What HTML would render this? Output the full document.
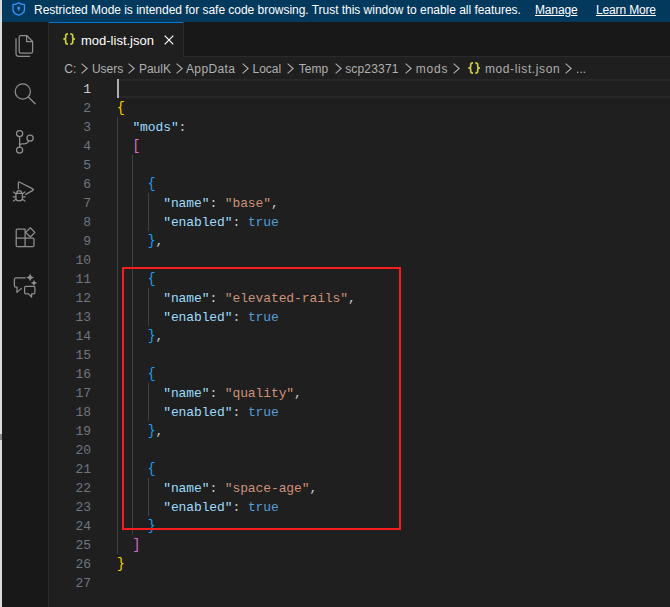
<!DOCTYPE html>
<html><head><meta charset="utf-8">
<style>
*{box-sizing:border-box}
html,body{margin:0;padding:0}
body{width:670px;height:607px;overflow:hidden;background:#1f1f1f;position:relative;font-family:"Liberation Sans",sans-serif}
.abs{position:absolute}
#strip{left:0;top:0;width:2px;height:607px;background:#d8dbe0}
#banner{left:2px;top:0;width:668px;height:22px;background:#04395e;color:#fff;font-size:12px}
#banner .t{position:absolute;top:3px;white-space:pre;line-height:14px}
#banner u{text-decoration:underline;text-underline-offset:1px}
#act{left:2px;top:22px;width:46px;height:585px;background:#181818}
#actb{left:48px;top:22px;width:1px;height:585px;background:#2b2b2b}
#tabs{left:49px;top:22px;width:621px;height:35px;background:#181818}
#tabsb{left:184px;top:56px;width:486px;height:1px;background:#2b2b2b}
#tab{left:49px;top:22px;width:134px;height:35px;background:#1f1f1f}
#tabtop{left:49px;top:22px;width:134px;height:1px;background:#0078d4}
#tabr{left:183px;top:22px;width:1px;height:35px;background:#2b2b2b}
.bc{position:absolute;top:61px;font-size:12px;color:#b0b0b0;white-space:pre;line-height:16px}
.chev{position:absolute;top:62.5px}
.ln{position:absolute;left:59px;width:32px;text-align:right;font-family:"Liberation Mono",monospace;font-size:13px;color:#6e7681;line-height:19px;height:19px}
.ln.act{color:#cccccc}
.cl{position:absolute;left:117px;font-family:"Liberation Mono",monospace;font-size:13px;letter-spacing:-0.105px;color:#cccccc;line-height:19px;height:19px;white-space:pre}
.k{color:#9cdcfe}.s{color:#ce9178}.b{color:#569cd6}
.g1{color:#ffd700}.g2{color:#da70d6}.g3{color:#179fff}
.g1,.g2,.g3{display:inline-block;transform:scaleY(1.1);transform-origin:50% 16px}
.guide{position:absolute;width:1px;background:#404040}
</style></head><body>
<div id="strip" class="abs"></div>
<div class="abs" style="left:0;top:434px;width:2px;height:6px;background:#8a8a8a"></div>
<div id="banner" class="abs">
  <svg class="abs" style="left:-2px;top:0" width="40" height="22" viewBox="0 0 40 22"><path d="M18.7 2.7 C17 3.9 15 4.6 13 4.6 V9.5 C13 12.3 15.5 14.3 18.7 15.2 C21.9 14.3 24.5 12.3 24.5 9.5 V4.6 C22.4 4.6 20.4 3.9 18.7 2.7 Z" fill="none" stroke="#3794ff" stroke-width="1.3" stroke-linejoin="round"/><circle cx="18.7" cy="7.9" r="1.4" fill="#3794ff"/><rect x="18.1" y="8.3" width="1.2" height="2.3" fill="#3794ff"/></svg>
  <span class="t" style="left:32px;letter-spacing:-0.03px">Restricted Mode is intended for safe code browsing. Trust this window to enable all features.</span>
  <span class="t" style="left:533px;letter-spacing:-0.15px"><u>Manage</u></span>
  <span class="t" style="left:594px;letter-spacing:-0.15px"><u>Learn More</u></span>
</div>
<div id="act" class="abs"></div>
<div id="actb" class="abs"></div>
<svg class="abs" style="left:0;top:0" width="48" height="607" viewBox="0 0 48 607" fill="none" stroke="#8e8e8e" stroke-width="1.25" stroke-linejoin="round" stroke-linecap="round">
<path d="M19.2 37.1 Q19.2 35.5 20.8 35.5 H26.6 L32.6 41.5 V51.5 Q32.6 53.1 31 53.1 H20.8 Q19.2 53.1 19.2 51.5 Z"/>
<path d="M26.6 35.5 V41.5 H32.6"/>
<path d="M16 38.6 V53.5 Q16 56.3 18.8 56.3 H29.6"/>
<circle cx="22.8" cy="91.5" r="7.6"/>
<path d="M28.3 97 L35.2 103.8"/>
<circle cx="19.6" cy="133.6" r="3.1"/>
<circle cx="19.6" cy="150.1" r="3.1"/>
<circle cx="30.1" cy="138.1" r="3.1"/>
<path d="M19.6 136.7 V147 M28.6 140.9 Q27.5 143.8 24.5 143.8 H22 Q19.6 143.8 19.6 146.2"/>
<path d="M18.4 188.6 V183.2 Q18.2 181.5 19.8 182.2 L32.8 188.9 Q34 189.7 32.8 190.4 L25.8 194.4"/>
<path d="M15.9 193.3 H22.4 V198.3 Q22.4 200.9 19.15 200.9 Q15.9 200.9 15.9 198.3 Z"/>
<path d="M16.7 193.3 Q16.7 190.7 19.15 190.7 Q21.6 190.7 21.6 193.3"/>
<path d="M13.4 191.9 L15.9 193.7 M13.1 196.8 H15.9 M13.4 201 L15.9 199.3 M24.9 191.9 L22.4 193.7 M25.2 196.8 H22.4 M24.9 201 L22.4 199.3"/>
<path d="M17.4 229.2 H25.1 V246.6 H17.4 Q16.2 246.6 16.2 245.4 V230.4 Q16.2 229.2 17.4 229.2 Z M16.2 238 H32.8 Q34 238 34 239.2 V245.4 Q34 246.6 32.8 246.6 H25.1"/>
<path d="M30.3 227.8 L34.9 232.4 L30.3 237 L25.7 232.4 Z"/>
<path d="M25.2 277.9 H16 Q14.4 277.9 14.4 279.5 V285.4 Q14.4 287 16 287 H17 V292.4 L21.4 288.4"/>
<path d="M26 286.4 H33.6 Q34.9 286.4 34.9 287.7 V292.6 Q34.9 293.9 33.6 293.9 H31.6 V297 L28.6 293.9 H26 Q24.6 293.9 24.6 292.6 V287.7 Q24.6 286.4 26 286.4 Z"/>
</svg>
<svg class="abs" style="left:0;top:0" width="48" height="607" viewBox="0 0 48 607" fill="#8e8e8e" stroke="none">
<path d="M30.1 273.6 Q30.86 276.88 34.300000000000004 277.6 Q30.86 278.32 30.1 281.6 Q29.34 278.32 25.900000000000002 277.6 Q29.34 276.88 30.1 273.6 Z"/>
<path d="M34.0 280.0 Q34.58 282.46 37.2 283.0 Q34.58 283.54 34.0 286.0 Q33.42 283.54 30.8 283.0 Q33.42 282.46 34.0 280.0 Z"/>
</svg>
<div id="tabs" class="abs"></div>
<div id="tabsb" class="abs"></div>
<div id="tab" class="abs"></div>
<div id="tabtop" class="abs"></div>
<div id="tabr" class="abs"></div>
<svg class="abs" style="left:62px;top:32px" width="14" height="14" viewBox="0 0 14 14"><path d="M6 1.9 C4.5 1.9 3.7 2.3 3.7 3.7 V5.5 C3.7 6.5 2.8 7 1.3 7 C2.8 7 3.7 7.5 3.7 8.5 V10.3 C3.7 11.7 4.5 12.1 6 12.1 M8.3 1.9 C9.8 1.9 10.7 2.3 10.7 3.7 V5.5 C10.7 6.5 11.5 7 13 7 C11.5 7 10.7 7.5 10.7 8.5 V10.3 C10.7 11.7 9.8 12.1 8.3 12.1" fill="none" stroke="#cbcb41" stroke-width="1.7"/></svg>
<span class="abs" style="left:81px;top:33px;font-size:13px;color:#fff;line-height:16px;white-space:pre">mod-list.json</span>
<svg class="abs" style="left:164px;top:35px" width="10" height="10" viewBox="0 0 10 10"><path d="M0.7 0.7 L9.3 9.3 M9.3 0.7 L0.7 9.3" stroke="#fff" stroke-width="1.2"/></svg>
<span class="bc" style="left:64.3px;letter-spacing:0px">C:</span>
<span class="bc" style="left:91.9px;letter-spacing:0px">Users</span>
<span class="bc" style="left:138.9px;letter-spacing:0px">PaulK</span>
<span class="bc" style="left:186.0px;letter-spacing:0.35px">AppData</span>
<span class="bc" style="left:252.5px;letter-spacing:0px">Local</span>
<span class="bc" style="left:298.8px;letter-spacing:0px">Temp</span>
<span class="bc" style="left:345.2px;letter-spacing:0.17px">scp23371</span>
<span class="bc" style="left:415.8px;letter-spacing:0.8px">mods</span>
<span class="bc" style="left:484.9px;letter-spacing:0.62px">mod-list.json</span>
<span class="bc" style="left:576.1px;letter-spacing:0px">...</span>
<svg class="chev" style="left:80.7px" width="7" height="11" viewBox="0 0 7 11"><path d="M0.6 0.6 L6.2 5.5 L0.6 10.4" fill="none" stroke="#b0b0b0" stroke-width="1.1"/></svg>
<svg class="chev" style="left:128.0px" width="7" height="11" viewBox="0 0 7 11"><path d="M0.6 0.6 L6.2 5.5 L0.6 10.4" fill="none" stroke="#b0b0b0" stroke-width="1.1"/></svg>
<svg class="chev" style="left:175.7px" width="7" height="11" viewBox="0 0 7 11"><path d="M0.6 0.6 L6.2 5.5 L0.6 10.4" fill="none" stroke="#b0b0b0" stroke-width="1.1"/></svg>
<svg class="chev" style="left:241.7px" width="7" height="11" viewBox="0 0 7 11"><path d="M0.6 0.6 L6.2 5.5 L0.6 10.4" fill="none" stroke="#b0b0b0" stroke-width="1.1"/></svg>
<svg class="chev" style="left:287.2px" width="7" height="11" viewBox="0 0 7 11"><path d="M0.6 0.6 L6.2 5.5 L0.6 10.4" fill="none" stroke="#b0b0b0" stroke-width="1.1"/></svg>
<svg class="chev" style="left:334.9px" width="7" height="11" viewBox="0 0 7 11"><path d="M0.6 0.6 L6.2 5.5 L0.6 10.4" fill="none" stroke="#b0b0b0" stroke-width="1.1"/></svg>
<svg class="chev" style="left:404.9px" width="7" height="11" viewBox="0 0 7 11"><path d="M0.6 0.6 L6.2 5.5 L0.6 10.4" fill="none" stroke="#b0b0b0" stroke-width="1.1"/></svg>
<svg class="chev" style="left:452.7px" width="7" height="11" viewBox="0 0 7 11"><path d="M0.6 0.6 L6.2 5.5 L0.6 10.4" fill="none" stroke="#b0b0b0" stroke-width="1.1"/></svg>
<svg class="chev" style="left:564.9px" width="7" height="11" viewBox="0 0 7 11"><path d="M0.6 0.6 L6.2 5.5 L0.6 10.4" fill="none" stroke="#b0b0b0" stroke-width="1.1"/></svg>
<svg class="abs" style="left:467.3px;top:61px" width="14" height="14" viewBox="0 0 14 14"><path d="M6 1.9 C4.5 1.9 3.7 2.3 3.7 3.7 V5.5 C3.7 6.5 2.8 7 1.3 7 C2.8 7 3.7 7.5 3.7 8.5 V10.3 C3.7 11.7 4.5 12.1 6 12.1 M8.3 1.9 C9.8 1.9 10.7 2.3 10.7 3.7 V5.5 C10.7 6.5 11.5 7 13 7 C11.5 7 10.7 7.5 10.7 8.5 V10.3 C10.7 11.7 9.8 12.1 8.3 12.1" fill="none" stroke="#cbcb41" stroke-width="1.7"/></svg>
<div class="abs" style="left:117px;top:79px;width:553px;height:19px;border-top:2px solid #282828;border-bottom:2px solid #282828"></div>
<div class="ln act" style="top:80px">1</div>
<div class="ln" style="top:99px">2</div>
<div class="cl" style="top:99px"><span class="g1">{</span></div>
<div class="ln" style="top:118px">3</div>
<div class="cl" style="top:118px">  <span class="k">"mods"</span>:</div>
<div class="ln" style="top:137px">4</div>
<div class="cl" style="top:137px">  <span class="g2">[</span></div>
<div class="ln" style="top:156px">5</div>
<div class="ln" style="top:175px">6</div>
<div class="cl" style="top:175px">    <span class="g3">{</span></div>
<div class="ln" style="top:194px">7</div>
<div class="cl" style="top:194px">      <span class="k">"name"</span>: <span class="s">"base"</span>,</div>
<div class="ln" style="top:213px">8</div>
<div class="cl" style="top:213px">      <span class="k">"enabled"</span>: <span class="b">true</span></div>
<div class="ln" style="top:232px">9</div>
<div class="cl" style="top:232px">    <span class="g3">}</span>,</div>
<div class="ln" style="top:251px">10</div>
<div class="ln" style="top:270px">11</div>
<div class="cl" style="top:270px">    <span class="g3">{</span></div>
<div class="ln" style="top:289px">12</div>
<div class="cl" style="top:289px">      <span class="k">"name"</span>: <span class="s">"elevated-rails"</span>,</div>
<div class="ln" style="top:308px">13</div>
<div class="cl" style="top:308px">      <span class="k">"enabled"</span>: <span class="b">true</span></div>
<div class="ln" style="top:327px">14</div>
<div class="cl" style="top:327px">    <span class="g3">}</span>,</div>
<div class="ln" style="top:346px">15</div>
<div class="ln" style="top:365px">16</div>
<div class="cl" style="top:365px">    <span class="g3">{</span></div>
<div class="ln" style="top:384px">17</div>
<div class="cl" style="top:384px">      <span class="k">"name"</span>: <span class="s">"quality"</span>,</div>
<div class="ln" style="top:403px">18</div>
<div class="cl" style="top:403px">      <span class="k">"enabled"</span>: <span class="b">true</span></div>
<div class="ln" style="top:422px">19</div>
<div class="cl" style="top:422px">    <span class="g3">}</span>,</div>
<div class="ln" style="top:441px">20</div>
<div class="ln" style="top:460px">21</div>
<div class="cl" style="top:460px">    <span class="g3">{</span></div>
<div class="ln" style="top:479px">22</div>
<div class="cl" style="top:479px">      <span class="k">"name"</span>: <span class="s">"space-age"</span>,</div>
<div class="ln" style="top:498px">23</div>
<div class="cl" style="top:498px">      <span class="k">"enabled"</span>: <span class="b">true</span></div>
<div class="ln" style="top:517px">24</div>
<div class="cl" style="top:517px">    <span class="g3">}</span></div>
<div class="ln" style="top:536px">25</div>
<div class="cl" style="top:536px">  <span class="g2">]</span></div>
<div class="ln" style="top:555px">26</div>
<div class="cl" style="top:555px"><span class="g1">}</span></div>
<div class="ln" style="top:574px">27</div>
<div class="guide" style="left:117px;top:117px;height:437px"></div>
<div class="guide" style="left:132px;top:155px;height:380px"></div>
<div class="guide" style="left:148px;top:193px;height:38px"></div>
<div class="guide" style="left:148px;top:288px;height:38px"></div>
<div class="guide" style="left:148px;top:383px;height:38px"></div>
<div class="guide" style="left:148px;top:478px;height:38px"></div>
<div class="abs" style="left:117px;top:79px;width:2px;height:19px;background:#aeafad"></div>
<div class="abs" style="left:122px;top:267px;width:279px;height:263px;border:2px solid #f51d1d"></div>
</body></html>
